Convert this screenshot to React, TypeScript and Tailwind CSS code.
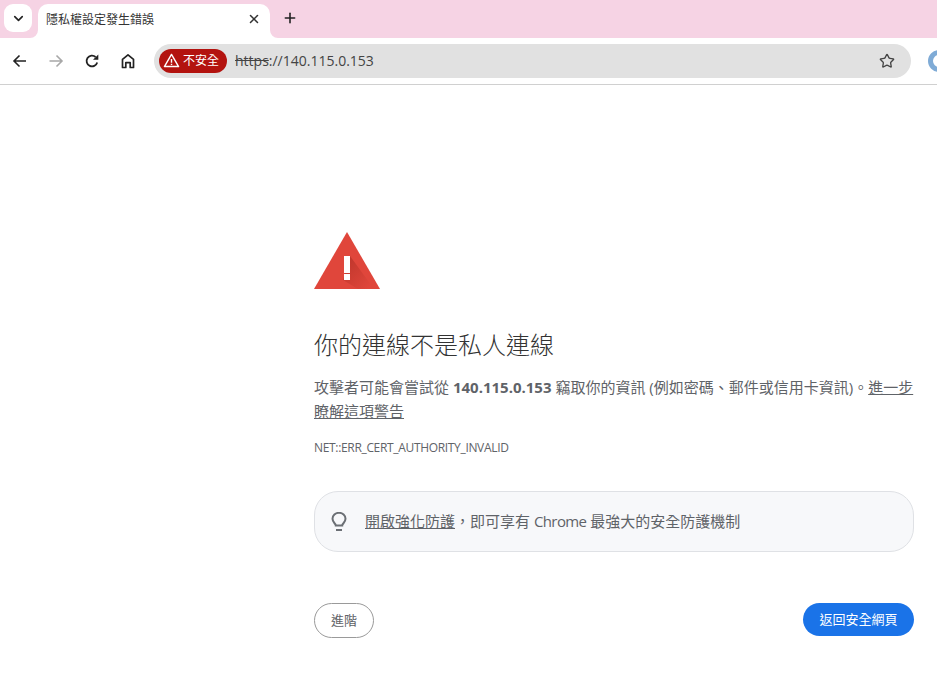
import { ChevronDown, Plus, Star, X } from 'lucide-react';

const FONT = "font-['Open_Sans','Noto_Sans_CJK_TC',sans-serif]";

function BackIcon({ color }: { color: string }) {
  return (
    <svg width="16" height="16" viewBox="0 0 16 16" fill="none" stroke={color} strokeWidth="1.6" className="shrink-0">
      <path d="M14 8H2M7.500 2.500 2 8l5.500 5.500" />
    </svg>
  );
}

function ForwardIcon({ color }: { color: string }) {
  return (
    <svg width="16" height="16" viewBox="0 0 16 16" fill="none" stroke={color} strokeWidth="1.6" className="shrink-0">
      <path d="M1.500 8H14M8.500 2.500 14 8l-5.500 5.500" />
    </svg>
  );
}

function ReloadIcon() {
  return (
    <svg width="16" height="16" viewBox="0 0 16 16" fill="none" className="shrink-0">
      <path d="M13.200 9.500A5.400 5.400 0 1 1 11.600 4" stroke="#222" strokeWidth="1.800" />
      <path d="M14.300 1.500v5.300H9z" fill="#222" />
    </svg>
  );
}

function HomeIcon() {
  return (
    <svg width="16" height="16" viewBox="0 0 16 16" fill="none" stroke="#222" strokeWidth="1.700" className="shrink-0">
      <path d="M2.500 14.500V6.300L8 1.800l5.500 4.500v8.200h-3.300V9.700H5.800v4.800z" strokeLinejoin="round" />
    </svg>
  );
}

function TabBar() {
  return (
    <div className="flex h-[38px] items-start bg-[#f6d3e4] pt-1 pl-1">
      <div className="flex h-7 w-7 items-center justify-center rounded-[9px] bg-white">
        <ChevronDown size={15} strokeWidth={2.6} className="text-[#222]" />
      </div>
      <div className="relative ml-[6px] flex h-[34px] w-[232px] items-center rounded-t-[10px] bg-white pl-2 pr-[9px]">
        {/* inverted corners of the tab */}
        <svg className="absolute bottom-0 -left-2 h-2 w-2" viewBox="0 0 8 8">
          <path d="M8 0v8H0a8 8 0 0 0 8-8z" fill="#fff" />
        </svg>
        <svg className="absolute bottom-0 -right-2 h-2 w-2" viewBox="0 0 8 8">
          <path d="M0 0v8h8a8 8 0 0 1-8-8z" fill="#fff" />
        </svg>
        <span className="-mt-[3px] flex-1 text-xs text-[#333]">隱私權設定發生錯誤</span>
        <X size={14} strokeWidth={2.6} className="-mt-[4px] text-[#333]" />
      </div>
      <div className="ml-[12px] flex h-[28px] items-center">
        <Plus size={16} strokeWidth={2.4} className="text-[#222]" />
      </div>
    </div>
  );
}

function Toolbar() {
  return (
    <div className="flex h-[47px] items-center border-b border-[#d0d0d0] bg-white pl-[12px] pb-[1px]">
      <BackIcon color="#222" />
      <div className="ml-[20px]">
        <ForwardIcon color="#a8a8a8" />
      </div>
      <div className="ml-[20px]">
        <ReloadIcon />
      </div>
      <div className="ml-[20px]">
        <HomeIcon />
      </div>
      <div className="ml-[18px] flex h-[34px] w-[757px] shrink-0 items-center rounded-full bg-[#e1e1e1] pl-[5px] pr-4">
        <div className="flex h-6 w-[68px] items-center rounded-full bg-[#b3130f] pl-[4px] text-xs text-white">
          <svg width="17" height="17" viewBox="0 0 24 24" fill="none" stroke="#fff" strokeWidth="2">
            <path d="M12 3.500 22 20.500H2z" strokeLinejoin="round" />
            <path d="M12 10v5M12 16.500v2" />
          </svg>
          <span className="ml-[3px]">不安全</span>
        </div>
        <div className="ml-[8px] flex-1 text-sm text-[#444]">
          <span className="line-through">https</span>
          <span>://140.115.0.153</span>
        </div>
        <Star size={16} strokeWidth={2} className="text-[#444]" />
      </div>
      <div className="ml-[17px] h-[22px] w-[22px] shrink-0 rounded-full border-[5px] border-[#7fabd6] bg-white" />
    </div>
  );
}

function WarningIcon() {
  return (
    <svg width="66" height="57" viewBox="0 0 66 57">
      <defs>
        <linearGradient id="shade" x1="0.1" y1="0.1" x2="0.9" y2="0.9">
          <stop offset="0" stopColor="#a52a20" stopOpacity="0.55" />
          <stop offset="1" stopColor="#a52a20" stopOpacity="0" />
        </linearGradient>
      </defs>
      <path d="M33 0 66 57H0z" fill="#e0463b" />
      <path d="M36 24 60 57H44L29 48z" fill="url(#shade)" />
      <rect x="30" y="24" width="6" height="17" fill="#fff" />
      <rect x="30" y="42" width="6" height="6" fill="#fff" />
    </svg>
  );
}

function Bulb() {
  return (
    <svg width="18" height="20" viewBox="0 0 18 20" fill="none" stroke="#6b6f74" strokeWidth="2">
      <path d="M5.800 13.500C5.800 11.500 2.500 10.500 2.500 6.800a6.500 6 0 0 1 13 0c0 3.700-3.300 4.700-3.300 6.700z" />
      <path d="M6 18h6" />
    </svg>
  );
}

export default function App() {
  return (
    <div className={`h-[679px] w-[937px] overflow-hidden bg-white ${FONT}`}>
      <TabBar />
      <Toolbar />
      <main className="ml-[314px] w-[600px] pt-[147px] text-[#5f6368]">
        <WarningIcon />
        <h1 className="mt-[39px] text-2xl font-light leading-[34px] text-[#333]">你的連線不是私人連線</h1>
        <p className="mt-[13px] text-[15px] leading-6">
          攻擊者可能會嘗試從 <strong className="font-bold">140.115.0.153</strong> 竊取你的資訊 (例如密碼、郵件或信用卡資訊)。
          <a className="underline">進一步瞭解這項警告</a>
        </p>
        <div className="mt-4 text-xs leading-[18px] tracking-[-0.33px]">NET::ERR_CERT_AUTHORITY_INVALID</div>
        <div className="mt-[34px] flex h-[61px] items-center rounded-[24px] border border-[#dfe1e5] bg-[#f7f8fa] pl-[15px] text-[15px]">
          <Bulb />
          <span className="ml-[17px]">
            <a className="underline">開啟強化防護</a>，即可享有 <span className="tracking-[-0.6px]">Chrome</span> 最強大的安全防護機制
          </span>
        </div>
        <div className="mt-[51px] flex items-start justify-between">
          <button className="h-[35px] w-[60px] rounded-[18px] border border-[#9a9a9a] bg-white text-[13px] text-[#5f6368]">進階</button>
          <button className="h-[33px] w-[111px] rounded-[17px] bg-[#1a73e8] text-[13px] text-white">返回安全網頁</button>
        </div>
      </main>
    </div>
  );
}
